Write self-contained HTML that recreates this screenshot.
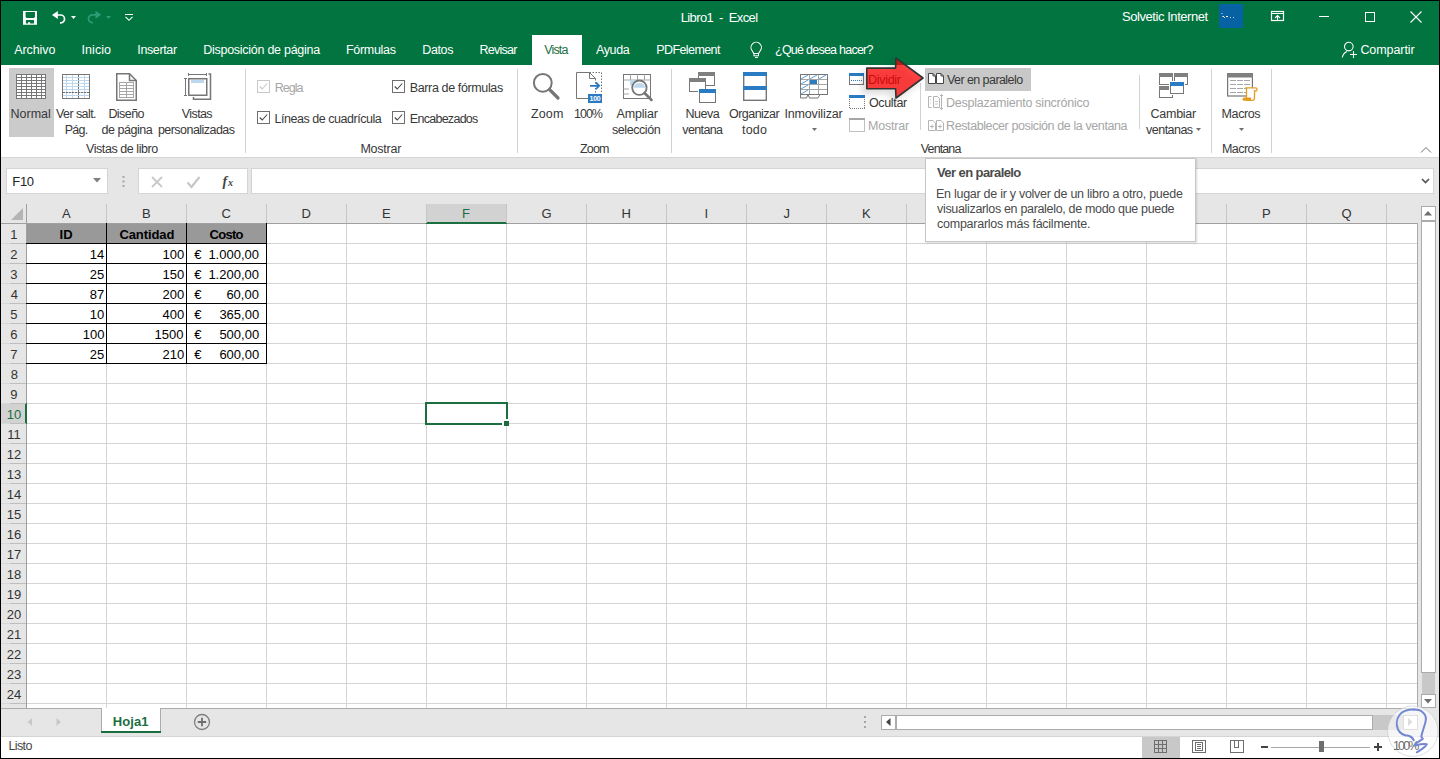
<!DOCTYPE html>
<html><head><meta charset="utf-8"><style>
html,body{margin:0;padding:0;width:1440px;height:759px;overflow:hidden;background:#000;}
.t{position:absolute;white-space:pre;line-height:20px;font-family:'Liberation Sans', sans-serif;}
svg{position:absolute;overflow:visible}
</style></head><body>
<div style="position:absolute;left:1px;top:1px;width:1438px;height:64px;background:#017440;"></div>
<div style="position:absolute;left:532px;top:35px;width:50px;height:30px;background:#FFFFFF;"></div>
<div style="position:absolute;left:1px;top:65px;width:1438px;height:92px;background:#FFFFFF;"></div>
<div style="position:absolute;left:1px;top:157px;width:1438px;height:1px;background:#D5D5D5;"></div>
<div style="position:absolute;left:1px;top:158px;width:1438px;height:46px;background:#E6E6E6;"></div>
<div style="position:absolute;left:9px;top:68px;width:45px;height:69px;background:#CBCBCB;"></div>
<div style="position:absolute;left:925px;top:68px;width:106px;height:23px;background:#C8C8C8;"></div>
<div style="position:absolute;left:245px;top:69px;width:1px;height:84px;background:#D2D2D2;"></div>
<div style="position:absolute;left:517px;top:69px;width:1px;height:84px;background:#D2D2D2;"></div>
<div style="position:absolute;left:671px;top:69px;width:1px;height:84px;background:#D2D2D2;"></div>
<div style="position:absolute;left:920px;top:83px;width:1px;height:47px;background:#D2D2D2;"></div>
<div style="position:absolute;left:1139px;top:75px;width:1px;height:54px;background:#D2D2D2;"></div>
<div style="position:absolute;left:1211px;top:69px;width:1px;height:84px;background:#D2D2D2;"></div>
<div style="position:absolute;left:1271px;top:69px;width:1px;height:84px;background:#D2D2D2;"></div>
<div style="position:absolute;left:6px;top:168px;width:102px;height:26px;background:#FFFFFF;box-sizing:border-box;border:1px solid #D4D4D4"></div>
<div style="position:absolute;left:138px;top:168px;width:110px;height:26px;background:#FFFFFF;box-sizing:border-box;border:1px solid #D4D4D4"></div>
<div style="position:absolute;left:251px;top:168px;width:1183px;height:26px;background:#FFFFFF;box-sizing:border-box;border:1px solid #D4D4D4"></div>
<div style="position:absolute;left:1px;top:203px;width:1417px;height:20px;background:#E6E6E6;"></div>
<div style="position:absolute;left:426px;top:204px;width:80px;height:19px;background:#D2D2D2;"></div>
<div style="position:absolute;left:1px;top:223px;width:1417px;height:1px;background:#A0A0A0;"></div>
<div style="position:absolute;left:426px;top:222px;width:81px;height:2px;background:#1B6E3F;"></div>
<div style="position:absolute;left:27px;top:224px;width:1391px;height:484px;background:#FFFFFF;"></div>
<div style="position:absolute;left:1px;top:224px;width:25px;height:484px;background:#E6E6E6;"></div>
<div style="position:absolute;left:1px;top:403px;width:25px;height:20px;background:#D2D2D2;"></div>
<div style="position:absolute;left:26px;top:204px;width:1px;height:504px;background:#A0A0A0;"></div>
<div style="position:absolute;left:25px;top:403px;width:2px;height:21px;background:#1B6E3F;"></div>
<div style="position:absolute;left:27px;top:224px;width:1391px;height:484px;background:transparent;background-image:repeating-linear-gradient(to right, transparent 0, transparent 79px, #D4D4D4 79px, #D4D4D4 80px),repeating-linear-gradient(to bottom, transparent 0, transparent 19px, #D4D4D4 19px, #D4D4D4 20px);"></div>
<div style="position:absolute;left:106px;top:204px;width:1px;height:19px;background:#C6C6C6;"></div>
<div style="position:absolute;left:186px;top:204px;width:1px;height:19px;background:#C6C6C6;"></div>
<div style="position:absolute;left:266px;top:204px;width:1px;height:19px;background:#C6C6C6;"></div>
<div style="position:absolute;left:346px;top:204px;width:1px;height:19px;background:#C6C6C6;"></div>
<div style="position:absolute;left:426px;top:204px;width:1px;height:19px;background:#C6C6C6;"></div>
<div style="position:absolute;left:506px;top:204px;width:1px;height:19px;background:#C6C6C6;"></div>
<div style="position:absolute;left:586px;top:204px;width:1px;height:19px;background:#C6C6C6;"></div>
<div style="position:absolute;left:666px;top:204px;width:1px;height:19px;background:#C6C6C6;"></div>
<div style="position:absolute;left:746px;top:204px;width:1px;height:19px;background:#C6C6C6;"></div>
<div style="position:absolute;left:826px;top:204px;width:1px;height:19px;background:#C6C6C6;"></div>
<div style="position:absolute;left:906px;top:204px;width:1px;height:19px;background:#C6C6C6;"></div>
<div style="position:absolute;left:986px;top:204px;width:1px;height:19px;background:#C6C6C6;"></div>
<div style="position:absolute;left:1066px;top:204px;width:1px;height:19px;background:#C6C6C6;"></div>
<div style="position:absolute;left:1146px;top:204px;width:1px;height:19px;background:#C6C6C6;"></div>
<div style="position:absolute;left:1226px;top:204px;width:1px;height:19px;background:#C6C6C6;"></div>
<div style="position:absolute;left:1306px;top:204px;width:1px;height:19px;background:#C6C6C6;"></div>
<div style="position:absolute;left:1386px;top:204px;width:1px;height:19px;background:#C6C6C6;"></div>
<div style="position:absolute;left:1px;top:243px;width:9px;height:1px;background:#D8D8D8;"></div>
<div style="position:absolute;left:10px;top:243px;width:16px;height:1px;background:#BDBDBD;"></div>
<div style="position:absolute;left:1px;top:263px;width:9px;height:1px;background:#D8D8D8;"></div>
<div style="position:absolute;left:10px;top:263px;width:16px;height:1px;background:#BDBDBD;"></div>
<div style="position:absolute;left:1px;top:283px;width:9px;height:1px;background:#D8D8D8;"></div>
<div style="position:absolute;left:10px;top:283px;width:16px;height:1px;background:#BDBDBD;"></div>
<div style="position:absolute;left:1px;top:303px;width:9px;height:1px;background:#D8D8D8;"></div>
<div style="position:absolute;left:10px;top:303px;width:16px;height:1px;background:#BDBDBD;"></div>
<div style="position:absolute;left:1px;top:323px;width:9px;height:1px;background:#D8D8D8;"></div>
<div style="position:absolute;left:10px;top:323px;width:16px;height:1px;background:#BDBDBD;"></div>
<div style="position:absolute;left:1px;top:343px;width:9px;height:1px;background:#D8D8D8;"></div>
<div style="position:absolute;left:10px;top:343px;width:16px;height:1px;background:#BDBDBD;"></div>
<div style="position:absolute;left:1px;top:363px;width:9px;height:1px;background:#D8D8D8;"></div>
<div style="position:absolute;left:10px;top:363px;width:16px;height:1px;background:#BDBDBD;"></div>
<div style="position:absolute;left:1px;top:383px;width:9px;height:1px;background:#D8D8D8;"></div>
<div style="position:absolute;left:10px;top:383px;width:16px;height:1px;background:#BDBDBD;"></div>
<div style="position:absolute;left:1px;top:403px;width:9px;height:1px;background:#D8D8D8;"></div>
<div style="position:absolute;left:10px;top:403px;width:16px;height:1px;background:#BDBDBD;"></div>
<div style="position:absolute;left:1px;top:423px;width:9px;height:1px;background:#D8D8D8;"></div>
<div style="position:absolute;left:10px;top:423px;width:16px;height:1px;background:#BDBDBD;"></div>
<div style="position:absolute;left:1px;top:443px;width:9px;height:1px;background:#D8D8D8;"></div>
<div style="position:absolute;left:10px;top:443px;width:16px;height:1px;background:#BDBDBD;"></div>
<div style="position:absolute;left:1px;top:463px;width:9px;height:1px;background:#D8D8D8;"></div>
<div style="position:absolute;left:10px;top:463px;width:16px;height:1px;background:#BDBDBD;"></div>
<div style="position:absolute;left:1px;top:483px;width:9px;height:1px;background:#D8D8D8;"></div>
<div style="position:absolute;left:10px;top:483px;width:16px;height:1px;background:#BDBDBD;"></div>
<div style="position:absolute;left:1px;top:503px;width:9px;height:1px;background:#D8D8D8;"></div>
<div style="position:absolute;left:10px;top:503px;width:16px;height:1px;background:#BDBDBD;"></div>
<div style="position:absolute;left:1px;top:523px;width:9px;height:1px;background:#D8D8D8;"></div>
<div style="position:absolute;left:10px;top:523px;width:16px;height:1px;background:#BDBDBD;"></div>
<div style="position:absolute;left:1px;top:543px;width:9px;height:1px;background:#D8D8D8;"></div>
<div style="position:absolute;left:10px;top:543px;width:16px;height:1px;background:#BDBDBD;"></div>
<div style="position:absolute;left:1px;top:563px;width:9px;height:1px;background:#D8D8D8;"></div>
<div style="position:absolute;left:10px;top:563px;width:16px;height:1px;background:#BDBDBD;"></div>
<div style="position:absolute;left:1px;top:583px;width:9px;height:1px;background:#D8D8D8;"></div>
<div style="position:absolute;left:10px;top:583px;width:16px;height:1px;background:#BDBDBD;"></div>
<div style="position:absolute;left:1px;top:603px;width:9px;height:1px;background:#D8D8D8;"></div>
<div style="position:absolute;left:10px;top:603px;width:16px;height:1px;background:#BDBDBD;"></div>
<div style="position:absolute;left:1px;top:623px;width:9px;height:1px;background:#D8D8D8;"></div>
<div style="position:absolute;left:10px;top:623px;width:16px;height:1px;background:#BDBDBD;"></div>
<div style="position:absolute;left:1px;top:643px;width:9px;height:1px;background:#D8D8D8;"></div>
<div style="position:absolute;left:10px;top:643px;width:16px;height:1px;background:#BDBDBD;"></div>
<div style="position:absolute;left:1px;top:663px;width:9px;height:1px;background:#D8D8D8;"></div>
<div style="position:absolute;left:10px;top:663px;width:16px;height:1px;background:#BDBDBD;"></div>
<div style="position:absolute;left:1px;top:683px;width:9px;height:1px;background:#D8D8D8;"></div>
<div style="position:absolute;left:10px;top:683px;width:16px;height:1px;background:#BDBDBD;"></div>
<div style="position:absolute;left:1px;top:703px;width:9px;height:1px;background:#D8D8D8;"></div>
<div style="position:absolute;left:10px;top:703px;width:16px;height:1px;background:#BDBDBD;"></div>
<div style="position:absolute;left:1417px;top:223px;width:1px;height:485px;background:#ABABAB;"></div>
<div style="position:absolute;left:27px;top:224px;width:239px;height:19px;background:#999999;"></div>
<div style="position:absolute;left:106px;top:223px;width:1px;height:141px;background:#000000;"></div>
<div style="position:absolute;left:186px;top:223px;width:1px;height:141px;background:#000000;"></div>
<div style="position:absolute;left:266px;top:223px;width:1px;height:141px;background:#000000;"></div>
<div style="position:absolute;left:26px;top:243px;width:241px;height:1px;background:#000000;"></div>
<div style="position:absolute;left:26px;top:263px;width:241px;height:1px;background:#000000;"></div>
<div style="position:absolute;left:26px;top:283px;width:241px;height:1px;background:#000000;"></div>
<div style="position:absolute;left:26px;top:303px;width:241px;height:1px;background:#000000;"></div>
<div style="position:absolute;left:26px;top:323px;width:241px;height:1px;background:#000000;"></div>
<div style="position:absolute;left:26px;top:343px;width:241px;height:1px;background:#000000;"></div>
<div style="position:absolute;left:26px;top:363px;width:241px;height:1px;background:#000000;"></div>
<div style="position:absolute;left:425px;top:402px;width:83px;height:23px;background:transparent;box-sizing:border-box;border:2px solid #1B6E3F"></div>
<div style="position:absolute;left:502px;top:419px;width:7px;height:7px;background:#FFFFFF;"></div>
<div style="position:absolute;left:504px;top:421px;width:5px;height:5px;background:#1B6E3F;"></div>
<svg style="position:absolute;left:11px;top:208px" width="13" height="13"><polygon points="12,0 12,12 0,12" fill="#B4B4B4"/></svg>
<div style="position:absolute;left:1418px;top:203px;width:21px;height:505px;background:#E6E6E6;"></div>
<div style="position:absolute;left:1421px;top:206px;width:15px;height:15px;background:#FFFFFF;box-sizing:border-box;border:1px solid #ABABAB"></div>
<div style="position:absolute;left:1421px;top:221px;width:15px;height:452px;background:#FFFFFF;box-sizing:border-box;border:1px solid #ABABAB"></div>
<div style="position:absolute;left:1422px;top:673px;width:13px;height:21px;background:#C8C8C8;"></div>
<div style="position:absolute;left:1421px;top:694px;width:15px;height:14px;background:#FFFFFF;box-sizing:border-box;border:1px solid #ABABAB"></div>
<div style="position:absolute;left:1px;top:708px;width:1438px;height:28px;background:#E6E6E6;"></div>
<div style="position:absolute;left:1px;top:708px;width:1417px;height:1px;background:#ABABAB;"></div>
<div style="position:absolute;left:101px;top:708px;width:60px;height:25px;background:#FFFFFF;box-sizing:border-box;border:1px solid #ABABAB;border-top:none"></div>
<div style="position:absolute;left:101px;top:731px;width:60px;height:2px;background:#1B6E3F;"></div>
<div style="position:absolute;left:881px;top:715px;width:537px;height:15px;background:#C8C8C8;"></div>
<div style="position:absolute;left:881px;top:715px;width:15px;height:15px;background:#FFFFFF;box-sizing:border-box;border:1px solid #ABABAB"></div>
<div style="position:absolute;left:896px;top:715px;width:477px;height:15px;background:#FFFFFF;box-sizing:border-box;border:1px solid #ABABAB"></div>
<div style="position:absolute;left:1403px;top:715px;width:15px;height:15px;background:#FFFFFF;box-sizing:border-box;border:1px solid #ABABAB"></div>
<div style="position:absolute;left:1px;top:736px;width:1438px;height:1px;background:#D4D4D4;"></div>
<div style="position:absolute;left:1px;top:737px;width:1438px;height:21px;background:#FFFFFF;"></div>
<div style="position:absolute;left:1142px;top:737px;width:38px;height:21px;background:#C8C8C8;"></div>
<div style="position:absolute;left:1271px;top:747px;width:99px;height:1px;background:#A6A6A6;"></div>
<div style="position:absolute;left:1319px;top:741px;width:5px;height:11px;background:#6E6E6E;"></div>
<div style="position:absolute;left:925px;top:158px;width:271px;height:84px;background:#FFFFFF;box-sizing:border-box;border:1px solid #C6C6C6;box-shadow:1px 1px 2px rgba(0,0,0,0.15);z-index:10"></div>
<svg style="left:20px;top:8px" width="20" height="20" viewBox="20 8 20 20"><path d="M23,11 H37 V24.8 H23 Z M25.6,12.1 V17 L26.6,18 H33.9 L35,17 V12.1 Z M25.9,20 V23.6 H28 V22.2 H30.1 V23.6 H34 V20 Z" fill="#fff" fill-rule="evenodd"/></svg>
<svg style="left:48px;top:8px" width="22" height="20" viewBox="48 8 22 20"><polygon points="52,15 57.8,11 57.8,19" fill="#fff"/><path d="M56,15 H60.5 A3.9,3.9 0 0 1 60.8,22.8 H60" fill="none" stroke="#fff" stroke-width="1.7"/></svg>
<svg style="left:71px;top:16px;" width="6" height="4" viewBox="0 0 6 4"><polygon points="0,0 5,0 2.5,3" fill="#fff"/></svg>
<svg style="left:84px;top:8px" width="22" height="20" viewBox="84 8 22 20"><polygon points="101.3,14.8 95.5,10.8 95.5,18.8" fill="#2D9C76"/><path d="M97,14.8 H92.5 A3.9,3.9 0 0 0 92.2,22.6 H93" fill="none" stroke="#2D9C76" stroke-width="1.7"/></svg>
<svg style="left:106px;top:16px;" width="6" height="4" viewBox="0 0 6 4"><polygon points="0,0 5,0 2.5,3" fill="#2D9C76"/></svg>
<svg style="left:124px;top:13px;" width="10" height="10" viewBox="0 0 10 10"><rect x="1" y="1" width="8" height="1" fill="#fff"/><path d="M1.5,3.8 L5,7.3 L8.5,3.8" fill="none" stroke="#fff" stroke-width="1.1"/></svg>
<svg style="left:1219px;top:4px;" width="24" height="24" viewBox="0 0 24 24"><rect width="24" height="24" fill="#0662A3"/><rect x="2.5" y="9" width="1" height="1" fill="#cfd8ff"/><rect x="3.5" y="12" width="1.5" height="1" fill="#fff"/><rect x="5" y="13" width="1" height="1" fill="#dcd"/><rect x="7" y="12" width="2" height="1" fill="#fff"/><rect x="11" y="13" width="1" height="1" fill="#ccd"/><rect x="14" y="13" width="1" height="1" fill="#ccd"/></svg>
<svg style="left:1270px;top:10px;" width="16" height="13" viewBox="0 0 16 13"><rect x="1.5" y="1.5" width="12" height="9" fill="none" stroke="#fff" stroke-width="1.2"/><rect x="1.5" y="3" width="12" height="1" fill="#fff"/><path d="M7.5,10.5 V5.5 M5,8 L7.5,5.5 L10,8" fill="none" stroke="#fff" stroke-width="1.1"/></svg>
<svg style="left:1318px;top:15px;" width="12" height="3" viewBox="0 0 12 3"><rect x="1" y="1" width="10" height="1" fill="#fff"/></svg>
<svg style="left:1364px;top:11px;" width="12" height="12" viewBox="0 0 12 12"><rect x="1.5" y="1.5" width="9" height="9" fill="none" stroke="#fff" stroke-width="1"/></svg>
<svg style="left:1409px;top:10px;" width="14" height="14" viewBox="0 0 14 14"><path d="M1.5,1.5 L12.5,12.5 M12.5,1.5 L1.5,12.5" stroke="#fff" stroke-width="1.1"/></svg>
<svg style="left:748px;top:40px;" width="17" height="20" viewBox="0 0 17 20"><path d="M5.8,13.5 L4,10.5 A5.2,5.2 0 1 1 12.4,10.5 L10.6,13.5 Z" fill="none" stroke="#fff" stroke-width="1.1"/><rect x="6" y="13.5" width="4.5" height="2.3" fill="none" stroke="#fff" stroke-width="1"/><rect x="7" y="17" width="2.8" height="1" fill="#fff"/></svg>
<svg style="left:1340px;top:40px;" width="20" height="20" viewBox="0 0 20 20"><circle cx="8.8" cy="6.6" r="4.3" fill="none" stroke="#fff" stroke-width="1.1"/><path d="M2.3,17.5 A8,8 0 0 1 7,11.6" fill="none" stroke="#fff" stroke-width="1.1"/><path d="M13.5,11 V18 M10,14.5 H17" stroke="#fff" stroke-width="1.1"/></svg>
<svg style="left:16px;top:74px;shape-rendering:crispEdges" width="30" height="25" viewBox="0 0 30 25"><rect x="0.5" y="0.5" width="29" height="24" fill="#fff" stroke="#767676" stroke-width="1.4"/><rect x="5" y="0" width="1" height="25" fill="#767676"/><rect x="10" y="0" width="1" height="25" fill="#767676"/><rect x="15" y="0" width="1" height="25" fill="#767676"/><rect x="20" y="0" width="1" height="25" fill="#767676"/><rect x="25" y="0" width="1" height="25" fill="#767676"/><rect x="0" y="3" width="30" height="1" fill="#767676"/><rect x="0" y="6" width="30" height="1" fill="#767676"/><rect x="0" y="9" width="30" height="1" fill="#767676"/><rect x="0" y="12" width="30" height="1" fill="#767676"/><rect x="0" y="15" width="30" height="1" fill="#767676"/><rect x="0" y="18" width="30" height="1" fill="#767676"/><rect x="0" y="21" width="30" height="1" fill="#767676"/></svg>
<svg style="left:62px;top:74px;shape-rendering:crispEdges" width="28" height="25" viewBox="0 0 28 25"><rect x="0" y="0" width="28" height="25" fill="#fff"/><rect x="1" y="3" width="26" height="1" fill="#BDD7EE"/><rect x="1" y="6" width="26" height="1" fill="#BDD7EE"/><rect x="1" y="9" width="26" height="1" fill="#BDD7EE"/><rect x="1" y="12" width="26" height="1" fill="#BDD7EE"/><rect x="1" y="15" width="26" height="1" fill="#BDD7EE"/><rect x="1" y="18" width="26" height="1" fill="#BDD7EE"/><rect x="1" y="21" width="26" height="1" fill="#BDD7EE"/><rect x="4" y="1" width="1" height="23" fill="#BDD7EE"/><rect x="10" y="1" width="1" height="23" fill="#BDD7EE"/><rect x="22" y="1" width="1" height="23" fill="#BDD7EE"/><rect x="0.5" y="0.5" width="27" height="24" fill="none" stroke="#767676" stroke-width="1.2"/><line x1="16.5" y1="1" x2="16.5" y2="24" stroke="#6E6E6E" stroke-width="1" stroke-dasharray="2,1"/><line x1="1" y1="18.5" x2="27" y2="18.5" stroke="#6E6E6E" stroke-width="1" stroke-dasharray="2,1"/></svg>
<svg style="left:116px;top:73px;" width="21" height="28" viewBox="0 0 21 28"><path d="M0.75,0.75 H13.5 L20.25,7.5 V27.25 H0.75 Z" fill="#fff" stroke="#767676" stroke-width="1.5"/><path d="M13.5,0.75 V7.5 H20.25" fill="none" stroke="#767676" stroke-width="1.5"/><rect x="3.5" y="9.5" width="14" height="15" fill="none" stroke="#A6A6A6" stroke-width="1"/><line x1="3.5" y1="12.5" x2="17.5" y2="12.5" stroke="#A6A6A6" stroke-width="1"/><line x1="3.5" y1="15.5" x2="17.5" y2="15.5" stroke="#A6A6A6" stroke-width="1"/><line x1="3.5" y1="18.5" x2="17.5" y2="18.5" stroke="#A6A6A6" stroke-width="1"/><line x1="3.5" y1="21.5" x2="17.5" y2="21.5" stroke="#A6A6A6" stroke-width="1"/><line x1="10.5" y1="9.5" x2="10.5" y2="24.5" stroke="#A6A6A6" stroke-width="1"/></svg>
<svg style="left:183px;top:73px;" width="29" height="28" viewBox="0 0 29 28"><path d="M1,5.5 H4 M2.5,5.5 V22.5 M1,22.5 H4" fill="none" stroke="#767676" stroke-width="1"/><path d="M5.5,0 V3 M5.5,1.5 H23.5 M23.5,0 V3" fill="none" stroke="#767676" stroke-width="1"/><rect x="5.75" y="5.75" width="18" height="16.5" fill="#fff" stroke="#767676" stroke-width="1.5"/><rect x="8" y="7" width="13" height="3" fill="#BDD7EE"/><path d="M25.5,1 H27.5 V26.25 H10.5 V24" fill="none" stroke="#767676" stroke-width="1.5"/></svg>
<svg style="left:257px;top:80px;" width="13" height="13" viewBox="0 0 13 13"><rect x="0.5" y="0.5" width="12" height="12" fill="#fff" stroke="#C8C8C8" stroke-width="1"/><path d="M2.8,6.5 L5.2,9 L10.2,3.5" fill="none" stroke="#C8C8C8" stroke-width="1.1"/></svg>
<svg style="left:257px;top:111px;" width="13" height="13" viewBox="0 0 13 13"><rect x="0.5" y="0.5" width="12" height="12" fill="#fff" stroke="#6E6E6E" stroke-width="1"/><path d="M2.8,6.5 L5.2,9 L10.2,3.5" fill="none" stroke="#444" stroke-width="1.1"/></svg>
<svg style="left:392px;top:80px;" width="13" height="13" viewBox="0 0 13 13"><rect x="0.5" y="0.5" width="12" height="12" fill="#fff" stroke="#6E6E6E" stroke-width="1"/><path d="M2.8,6.5 L5.2,9 L10.2,3.5" fill="none" stroke="#444" stroke-width="1.1"/></svg>
<svg style="left:392px;top:111px;" width="13" height="13" viewBox="0 0 13 13"><rect x="0.5" y="0.5" width="12" height="12" fill="#fff" stroke="#6E6E6E" stroke-width="1"/><path d="M2.8,6.5 L5.2,9 L10.2,3.5" fill="none" stroke="#444" stroke-width="1.1"/></svg>
<svg style="left:530px;top:70px;" width="32" height="32" viewBox="0 0 32 32"><circle cx="12.8" cy="12.8" r="8.9" fill="#fff" stroke="#767676" stroke-width="2"/><path d="M19.5,19.5 L28,28" stroke="#767676" stroke-width="3.2" stroke-linecap="round"/></svg>
<svg style="left:576px;top:72px;" width="27" height="31" viewBox="0 0 27 31"><path d="M19.5,20 V6.5 L13.5,0.5 H0.5 V26.5 H12" fill="#fff" stroke="#767676" stroke-width="1"/><path d="M13.5,0.5 V6.5 H19.5" fill="none" stroke="#767676" stroke-width="1"/><rect x="19" y="7" width="2" height="14" fill="#fff"/><path d="M13.5,0.5 H25.5 V20.5 M19.5,7 V20.5" fill="none" stroke="#767676" stroke-width="1" stroke-dasharray="1.5,1.5"/><path d="M14,13.8 H23 M19.8,10.5 L23.2,13.8 L19.8,17.1" fill="none" stroke="#2B7BC2" stroke-width="1.8"/><rect x="12" y="22" width="14" height="9" fill="#2B7BC2"/><text x="19" y="29.3" font-family="Liberation Sans" font-weight="bold" font-size="7" letter-spacing="-0.3" fill="#fff" text-anchor="middle">100</text></svg>
<svg style="left:623px;top:74px;" width="30" height="28" viewBox="0 0 30 28"><rect x="0.5" y="0.5" width="27" height="24" fill="#fff" stroke="#767676" stroke-width="1"/><line x1="7.5" y1="0.5" x2="7.5" y2="6" stroke="#A6A6A6" stroke-width="1"/><line x1="14.5" y1="0.5" x2="14.5" y2="6" stroke="#A6A6A6" stroke-width="1"/><line x1="21.5" y1="0.5" x2="21.5" y2="6" stroke="#A6A6A6" stroke-width="1"/><line x1="0.5" y1="6" x2="27.5" y2="6" stroke="#A6A6A6" stroke-width="1"/><line x1="0.5" y1="15" x2="6" y2="15" stroke="#A6A6A6" stroke-width="1"/><line x1="0.5" y1="20" x2="6" y2="20" stroke="#A6A6A6" stroke-width="1"/><rect x="7" y="6" width="5" height="5" fill="#BDD7EE"/><circle cx="16.4" cy="13.7" r="7.2" fill="#fff" stroke="#767676" stroke-width="1.8"/><path d="M10.5,13.8 A6,6 0 0 1 22.3,13.8 Z" fill="#BDD7EE"/><path d="M21.5,19 L28.5,26" stroke="#767676" stroke-width="2.6" stroke-linecap="round"/></svg>
<svg style="left:689px;top:72px;shape-rendering:crispEdges" width="27" height="31" viewBox="0 0 27 31"><rect x="9.5" y="0.5" width="16" height="13" fill="#fff" stroke="#767676" stroke-width="1"/><rect x="9" y="0" width="17" height="4" fill="#7F7F7F"/><rect x="0.5" y="6.5" width="16" height="13" fill="#fff" stroke="#767676" stroke-width="1"/><rect x="0" y="6" width="17" height="4" fill="#7F7F7F"/><rect x="9" y="15" width="3" height="6" fill="#fff"/><rect x="10.5" y="17.5" width="16" height="13" fill="#fff" stroke="#767676" stroke-width="1"/><rect x="10" y="17" width="17" height="4" fill="#2B7BC2"/></svg>
<svg style="left:743px;top:72px;" width="24" height="29" viewBox="0 0 24 29"><rect x="0.7" y="0.7" width="22.6" height="27.6" fill="#fff" stroke="#767676" stroke-width="1.4"/><rect x="0" y="0" width="24" height="4" fill="#2B7BC2"/><rect x="0" y="14" width="24" height="4" fill="#2B7BC2"/></svg>
<svg style="left:800px;top:74px;" width="28" height="25" viewBox="0 0 28 25"><path d="M0.5,0.5 H27.5 V20.5 H20 L18,24 H9.5 L8,20.5 H8 L6.5,24 H0.5 Z" fill="#fff" stroke="#767676" stroke-width="1"/><line x1="9.5" y1="0.5" x2="9.5" y2="20.5" stroke="#A6A6A6" stroke-width="1"/><line x1="18.5" y1="0.5" x2="18.5" y2="20.5" stroke="#A6A6A6" stroke-width="1"/><line x1="0.5" y1="5.5" x2="27.5" y2="5.5" stroke="#A6A6A6" stroke-width="1"/><line x1="0.5" y1="10.5" x2="27.5" y2="10.5" stroke="#A6A6A6" stroke-width="1"/><line x1="0.5" y1="15.5" x2="27.5" y2="15.5" stroke="#A6A6A6" stroke-width="1"/><line x1="0.5" y1="20.5" x2="27.5" y2="20.5" stroke="#A6A6A6" stroke-width="1"/><rect x="0.5" y="0.5" width="27" height="20" fill="none" stroke="#767676" stroke-width="1"/><rect x="10" y="6" width="7" height="4" fill="#2B7BC2"/><line x1="1" y1="5" x2="8" y2="1" stroke="#5B9BD5" stroke-width="1"/><line x1="10" y1="5" x2="17" y2="1" stroke="#5B9BD5" stroke-width="1"/><line x1="19" y1="5" x2="26" y2="1" stroke="#5B9BD5" stroke-width="1"/><line x1="1" y1="10" x2="8" y2="6" stroke="#5B9BD5" stroke-width="1"/><line x1="1" y1="15" x2="8" y2="11" stroke="#5B9BD5" stroke-width="1"/><line x1="1" y1="20" x2="8" y2="16" stroke="#5B9BD5" stroke-width="1"/></svg>
<svg style="left:849px;top:73px;shape-rendering:crispEdges" width="15" height="12" viewBox="0 0 15 12"><rect x="0.5" y="0.5" width="14" height="11" fill="#fff" stroke="#767676" stroke-width="1"/><rect x="0" y="0" width="15" height="3" fill="#2B7BC2"/><line x1="2" y1="7.5" x2="13" y2="7.5" stroke="#2B7BC2" stroke-dasharray="1,1"/></svg>
<svg style="left:849px;top:95px;shape-rendering:crispEdges" width="16" height="14" viewBox="0 0 16 14"><rect x="0.5" y="0.5" width="15" height="13" fill="none" stroke="#767676" stroke-width="1" stroke-dasharray="1,1"/><rect x="0" y="0" width="16" height="3" fill="#2B7BC2"/></svg>
<svg style="left:849px;top:118px;shape-rendering:crispEdges" width="16" height="14" viewBox="0 0 16 14"><rect x="0.5" y="0.5" width="15" height="13" fill="#fff" stroke="#BFBFBF" stroke-width="1"/><rect x="0" y="0" width="16" height="2" fill="#A6A6A6"/></svg>
<svg style="left:928px;top:73px;" width="16" height="11" viewBox="0 0 16 11"><path d="M0.5,0.5 H5 L7.5,3 V10.5 H0.5 Z M8.5,0.5 H13 L15.5,3 V10.5 H8.5 Z" fill="#fff" stroke="#444" stroke-width="1"/><path d="M5,0.5 V3 H7.5 M13,0.5 V3 H15.5" fill="none" stroke="#444" stroke-width="1"/></svg>
<svg style="left:928px;top:94px;" width="16" height="16" viewBox="0 0 16 16"><path d="M3.5,2.5 H0.5 V13.5 H3.5" fill="none" stroke="#B4B4B4"/><path d="M5.5,2.5 H9.5 L11.5,4.5 V13.5 H5.5 Z" fill="none" stroke="#B4B4B4"/><path d="M13.5,0.5 V15.5 M12,2 L13.5,0.5 L15,2 M12,14 L13.5,15.5 L15,14" fill="none" stroke="#B4B4B4"/><path d="M2,6 H3 M2,9 H3 M7,7.5 H10 M7,10 H10" stroke="#C8C8C8"/></svg>
<svg style="left:928px;top:120px;" width="16" height="11" viewBox="0 0 16 11"><path d="M0.5,0.5 H5 L7.5,3 V10.5 H0.5 Z M8.5,0.5 H13 L15.5,3 V10.5 H8.5 Z" fill="#fff" stroke="#B4B4B4" stroke-width="1"/><path d="M2,6.5 H6 M4,4.5 V8.5 M10,6.5 H14 M12,4.5 V8.5" stroke="#B4B4B4"/></svg>
<svg style="left:1159px;top:73px;shape-rendering:crispEdges" width="29" height="25" viewBox="0 0 29 25"><rect x="0.5" y="0.5" width="13" height="11" fill="#fff" stroke="#767676" stroke-width="1"/><rect x="0" y="0" width="14" height="4" fill="#7F7F7F"/><rect x="15.5" y="0.5" width="13" height="11" fill="#fff" stroke="#767676" stroke-width="1"/><rect x="15" y="0" width="14" height="4" fill="#7F7F7F"/><rect x="0.5" y="13.5" width="13" height="11" fill="#fff" stroke="#767676" stroke-width="1"/><rect x="0" y="13" width="14" height="4" fill="#7F7F7F"/><rect x="10" y="8" width="16" height="14" fill="#fff"/><rect x="11.5" y="9.5" width="13" height="11" fill="#fff" stroke="#767676" stroke-width="1"/><rect x="11" y="9" width="14" height="4" fill="#2B7BC2"/></svg>
<svg style="left:1227px;top:73px;" width="32" height="29" viewBox="0 0 32 29"><rect x="0.6" y="0.6" width="24.8" height="22.4" fill="#fff" stroke="#767676" stroke-width="1.2"/><rect x="0" y="0" width="26" height="4.5" fill="#7F7F7F"/><line x1="3" y1="7.5" x2="9" y2="7.5" stroke="#A6A6A6" stroke-width="1"/><line x1="10" y1="7.5" x2="16" y2="7.5" stroke="#A6A6A6" stroke-width="1"/><line x1="17" y1="7.5" x2="23" y2="7.5" stroke="#A6A6A6" stroke-width="1"/><line x1="3" y1="11.5" x2="9" y2="11.5" stroke="#A6A6A6" stroke-width="1"/><line x1="10" y1="11.5" x2="16" y2="11.5" stroke="#A6A6A6" stroke-width="1"/><line x1="17" y1="11.5" x2="23" y2="11.5" stroke="#A6A6A6" stroke-width="1"/><line x1="3" y1="15.5" x2="9" y2="15.5" stroke="#A6A6A6" stroke-width="1"/><line x1="10" y1="15.5" x2="16" y2="15.5" stroke="#A6A6A6" stroke-width="1"/><line x1="17" y1="15.5" x2="23" y2="15.5" stroke="#A6A6A6" stroke-width="1"/><line x1="3" y1="19.5" x2="9" y2="19.5" stroke="#A6A6A6" stroke-width="1"/><line x1="10" y1="19.5" x2="16" y2="19.5" stroke="#A6A6A6" stroke-width="1"/><line x1="17" y1="19.5" x2="23" y2="19.5" stroke="#A6A6A6" stroke-width="1"/><path d="M19,14.8 H28.5 A1.6,1.6 0 0 1 28.5,18 H27.5 V25.5 A1.8,1.8 0 0 1 25.7,27.3 H19.5 V15.5 A0.8,0.8 0 0 1 19,14.8 Z" fill="#fff" stroke="#E19D22" stroke-width="1.3"/><path d="M17.2,24.5 H24 V27.8 H17.2 A1.6,1.6 0 0 1 17.2,24.5 Z" fill="#E19D22"/></svg>
<svg style="left:812px;top:128px;" width="5" height="3" viewBox="0 0 5 3"><polygon points="0,0 5,0 2.5,3" fill="#6E6E6E"/></svg>
<svg style="left:1196px;top:128px;" width="5" height="3" viewBox="0 0 5 3"><polygon points="0,0 5,0 2.5,3" fill="#6E6E6E"/></svg>
<svg style="left:1239px;top:128px;" width="5" height="3" viewBox="0 0 5 3"><polygon points="0,0 5,0 2.5,3" fill="#6E6E6E"/></svg>
<svg style="left:1420px;top:146px;" width="12" height="8" viewBox="0 0 12 8"><path d="M1,6.5 L6,1.5 L11,6.5" fill="none" stroke="#6E6E6E" stroke-width="1"/></svg>
<svg style="left:93px;top:178px;" width="9" height="5" viewBox="0 0 9 5"><polygon points="0,0 8,0 4,4.5" fill="#7F7F7F"/></svg>
<svg style="left:122px;top:176px;" width="3" height="11" viewBox="0 0 3 11"><rect x="0.5" y="0" width="2" height="2" fill="#A6A6A6"/><rect x="0.5" y="4.5" width="2" height="2" fill="#A6A6A6"/><rect x="0.5" y="9" width="2" height="2" fill="#A6A6A6"/></svg>
<svg style="left:150px;top:175px;" width="14" height="14" viewBox="0 0 14 14"><path d="M2,2 L12,12 M12,2 L2,12" stroke="#C8C8C8" stroke-width="1.8"/></svg>
<svg style="left:186px;top:175px;" width="15" height="14" viewBox="0 0 15 14"><path d="M1.5,7.5 L5.5,12 L13.5,2" fill="none" stroke="#C8C8C8" stroke-width="2.3"/></svg>
<svg style="left:220px;top:172px;" width="20" height="18" viewBox="0 0 20 18"><text x="2.5" y="13.5" font-family="Liberation Serif" font-style="italic" font-weight="bold" font-size="14" fill="#444">f</text><text x="8" y="13.5" font-family="Liberation Serif" font-style="italic" font-weight="bold" font-size="10" fill="#444">x</text></svg>
<svg style="left:1421px;top:178px;" width="9" height="6" viewBox="0 0 9 6"><path d="M1,1 L4.5,4.5 L8,1" fill="none" stroke="#555" stroke-width="1.7"/></svg>
<svg style="left:1424px;top:211px;" width="9" height="5" viewBox="0 0 9 5"><polygon points="0,4.5 8,4.5 4,0" fill="#6E6E6E"/></svg>
<svg style="left:1424px;top:699px;" width="9" height="5" viewBox="0 0 9 5"><polygon points="0,0 8,0 4,4.5" fill="#6E6E6E"/></svg>
<svg style="left:886px;top:718px;" width="5" height="9" viewBox="0 0 5 9"><polygon points="4.5,0 4.5,8 0,4" fill="#444"/></svg>
<svg style="left:1408px;top:718px;" width="5" height="9" viewBox="0 0 5 9"><polygon points="0,0 0,8 4.5,4" fill="#A6A6A6"/></svg>
<svg style="left:27px;top:718px;" width="6" height="9" viewBox="0 0 6 9"><polygon points="5,0 5,8 0.5,4" fill="#C8C8C8"/></svg>
<svg style="left:56px;top:718px;" width="6" height="9" viewBox="0 0 6 9"><polygon points="0.5,0 0.5,8 5,4" fill="#C8C8C8"/></svg>
<svg style="left:864px;top:716px;" width="3" height="12" viewBox="0 0 3 12"><rect x="0" y="0" width="2" height="2" fill="#A6A6A6"/><rect x="0" y="5" width="2" height="2" fill="#A6A6A6"/><rect x="0" y="10" width="2" height="2" fill="#A6A6A6"/></svg>
<svg style="left:193px;top:713px;" width="18" height="18" viewBox="0 0 18 18"><circle cx="9" cy="9" r="7.5" fill="none" stroke="#7F7F7F" stroke-width="1.3"/><path d="M9,4.8 V13.2 M4.8,9 H13.2" stroke="#6E6E6E" stroke-width="1.8"/></svg>
<svg style="left:1154px;top:740px;shape-rendering:crispEdges" width="13" height="13" viewBox="0 0 13 13"><line x1="0.5" y1="0" x2="0.5" y2="13" stroke="#6E6E6E" stroke-width="1"/><line x1="0" y1="0.5" x2="13" y2="0.5" stroke="#6E6E6E" stroke-width="1"/><line x1="4.5" y1="0" x2="4.5" y2="13" stroke="#6E6E6E" stroke-width="1"/><line x1="0" y1="4.5" x2="13" y2="4.5" stroke="#6E6E6E" stroke-width="1"/><line x1="8.5" y1="0" x2="8.5" y2="13" stroke="#6E6E6E" stroke-width="1"/><line x1="0" y1="8.5" x2="13" y2="8.5" stroke="#6E6E6E" stroke-width="1"/><line x1="12.5" y1="0" x2="12.5" y2="13" stroke="#6E6E6E" stroke-width="1"/><line x1="0" y1="12.5" x2="13" y2="12.5" stroke="#6E6E6E" stroke-width="1"/></svg>
<svg style="left:1192px;top:740px;shape-rendering:crispEdges" width="14" height="13" viewBox="0 0 14 13"><rect x="0.5" y="0.5" width="13" height="12" fill="none" stroke="#6E6E6E"/><rect x="3.5" y="2.5" width="7" height="8" fill="none" stroke="#6E6E6E"/><path d="M5,4.5 H9 M5,6.5 H9 M5,8.5 H9" stroke="#6E6E6E"/></svg>
<svg style="left:1230px;top:740px;shape-rendering:crispEdges" width="14" height="13" viewBox="0 0 14 13"><rect x="0.5" y="0.5" width="13" height="12" fill="none" stroke="#6E6E6E"/><path d="M4.5,0.5 V7.5 H8.5 V0.5" fill="none" stroke="#6E6E6E"/></svg>
<svg style="left:1261px;top:746px;" width="7" height="2" viewBox="0 0 7 2"><rect width="7" height="2" fill="#444"/></svg>
<svg style="left:1374px;top:743px;" width="8" height="8" viewBox="0 0 8 8"><path d="M4,0 V8 M0,4 H8" stroke="#444" stroke-width="2"/></svg>
<svg style="left:850px;top:50px;z-index:5;filter:drop-shadow(-4px 4px 3px rgba(0,0,0,0.18))" width="80" height="56" viewBox="850 50 80 56"><polygon points="866.8,68.1 895.6,68.1 895.9,58 923,78 896,98 895.6,88.7 866.8,88.7" fill="rgba(255,0,0,0.74)" stroke="#333" stroke-width="1.6" stroke-linejoin="round"/></svg>
<svg style="left:1385px;top:704px" width="55" height="55" viewBox="1385 704 55 55"><circle cx="1412.8" cy="731.2" r="25.2" fill="rgba(255,255,255,0.62)" stroke="rgba(190,195,205,0.55)" stroke-width="1"/></svg>
<svg style="left:1385px;top:704px;z-index:12" width="55" height="55" viewBox="1385 704 55 55"><path d="M1413.8,709.5 C1407,709.5 1402,711.5 1399.5,715 C1396.5,719 1396,725 1398,729.5 C1400,733.5 1404,735.5 1408.5,735.8 C1411,736.5 1413,738.5 1413.8,740.3" fill="none" stroke="#7487D2" stroke-width="2" stroke-linecap="round"/><path d="M1413.8,709.5 C1417,709.5 1420,710 1421.8,711.5 C1425,714 1426.3,717 1425.8,720 C1425.3,725 1422.5,730 1421.3,736.6 L1422.8,738.8 L1416,743.3 L1414.5,745.6 C1418,744.8 1423,743.5 1426.8,744.3 C1425,747.5 1420,750.5 1416.8,752.3" fill="none" stroke="#7487D2" stroke-width="2" stroke-linecap="round" stroke-linejoin="round"/></svg>
<div class="t" style="left:680.70px;top:8.00px;font-size:13px;color:#FFFFFF;letter-spacing:-0.620px">Libro1  -  Excel</div>
<div class="t" style="left:1122.00px;top:7.00px;font-size:13px;color:#FFFFFF;letter-spacing:-0.438px">Solvetic Internet</div>
<div class="t" style="left:14.20px;top:40.00px;font-size:12.5px;color:#FFFFFF;letter-spacing:-0.083px">Archivo</div>
<div class="t" style="left:81.50px;top:40.00px;font-size:12.5px;color:#FFFFFF;letter-spacing:0.060px">Inicio</div>
<div class="t" style="left:137.30px;top:40.00px;font-size:12.5px;color:#FFFFFF;letter-spacing:-0.371px">Insertar</div>
<div class="t" style="left:203.20px;top:40.00px;font-size:12.5px;color:#FFFFFF;letter-spacing:-0.265px">Disposición de página</div>
<div class="t" style="left:346.00px;top:40.00px;font-size:12.5px;color:#FFFFFF;letter-spacing:-0.300px">Fórmulas</div>
<div class="t" style="left:422.30px;top:40.00px;font-size:12.5px;color:#FFFFFF;letter-spacing:-0.375px">Datos</div>
<div class="t" style="left:479.40px;top:40.00px;font-size:12.5px;color:#FFFFFF;letter-spacing:-0.733px">Revisar</div>
<div class="t" style="left:596.00px;top:40.00px;font-size:12.5px;color:#FFFFFF;letter-spacing:-0.375px">Ayuda</div>
<div class="t" style="left:656.20px;top:40.00px;font-size:12.5px;color:#FFFFFF;letter-spacing:-0.578px">PDFelement</div>
<div class="t" style="left:775.00px;top:40.00px;font-size:12.5px;color:#FFFFFF;letter-spacing:-0.750px">¿Qué desea hacer?</div>
<div class="t" style="left:1360.40px;top:40.00px;font-size:12.5px;color:#FFFFFF;letter-spacing:-0.075px">Compartir</div>
<div class="t" style="left:544.30px;top:40.00px;font-size:12.5px;color:#1B6E3F;letter-spacing:-0.875px">Vista</div>
<div class="t" style="left:10.50px;top:104.00px;font-size:12.5px;color:#383838">Normal</div>
<div class="t" style="left:56.00px;top:104.00px;font-size:12.5px;color:#383838;letter-spacing:-0.575px">Ver salt.</div>
<div class="t" style="left:64.80px;top:120.00px;font-size:12.5px;color:#383838;letter-spacing:-0.767px">Pág.</div>
<div class="t" style="left:108.40px;top:104.00px;font-size:12.5px;color:#383838;letter-spacing:-0.560px">Diseño</div>
<div class="t" style="left:101.60px;top:120.00px;font-size:12.5px;color:#383838;letter-spacing:-0.475px">de página</div>
<div class="t" style="left:181.80px;top:104.00px;font-size:12.5px;color:#383838;letter-spacing:-0.600px">Vistas</div>
<div class="t" style="left:157.90px;top:120.00px;font-size:12.5px;color:#383838;letter-spacing:-0.538px">personalizadas</div>
<div class="t" style="left:86.00px;top:139.00px;font-size:12.5px;color:#383838;letter-spacing:-0.429px">Vistas de libro</div>
<div class="t" style="left:274.80px;top:78.00px;font-size:12.5px;color:#A6A6A6;letter-spacing:-0.975px">Regla</div>
<div class="t" style="left:274.60px;top:109.00px;font-size:12.5px;color:#383838;letter-spacing:-0.474px">Líneas de cuadrícula</div>
<div class="t" style="left:409.80px;top:78.00px;font-size:12.5px;color:#383838;letter-spacing:-0.375px">Barra de fórmulas</div>
<div class="t" style="left:409.80px;top:109.00px;font-size:12.5px;color:#383838;letter-spacing:-0.720px">Encabezados</div>
<div class="t" style="left:360.40px;top:139.00px;font-size:12.5px;color:#383838;letter-spacing:-0.233px">Mostrar</div>
<div class="t" style="left:531.00px;top:104.00px;font-size:12.5px;color:#383838;letter-spacing:0.133px">Zoom</div>
<div class="t" style="left:574.00px;top:104.00px;font-size:12.5px;color:#383838;letter-spacing:-1.000px">100%</div>
<div class="t" style="left:616.50px;top:104.00px;font-size:12.5px;color:#383838;letter-spacing:-0.167px">Ampliar</div>
<div class="t" style="left:612.00px;top:120.00px;font-size:12.5px;color:#383838;letter-spacing:-0.438px">selección</div>
<div class="t" style="left:580.00px;top:139.00px;font-size:12.5px;color:#383838;letter-spacing:-0.833px">Zoom</div>
<div class="t" style="left:685.40px;top:104.00px;font-size:12.5px;color:#383838;letter-spacing:-0.450px">Nueva</div>
<div class="t" style="left:682.30px;top:120.00px;font-size:12.5px;color:#383838;letter-spacing:-0.633px">ventana</div>
<div class="t" style="left:729.00px;top:104.00px;font-size:12.5px;color:#383838;letter-spacing:-0.537px">Organizar</div>
<div class="t" style="left:742.00px;top:120.00px;font-size:12.5px;color:#383838;letter-spacing:0.200px">todo</div>
<div class="t" style="left:784.40px;top:104.00px;font-size:12.5px;color:#383838;letter-spacing:-0.140px">Inmovilizar</div>
<div class="t" style="left:867.90px;top:70.00px;font-size:12.5px;color:#383838;letter-spacing:-0.267px">Dividir</div>
<div class="t" style="left:868.90px;top:93.00px;font-size:12.5px;color:#383838;letter-spacing:-0.333px">Ocultar</div>
<div class="t" style="left:868.00px;top:116.00px;font-size:12.5px;color:#A6A6A6;letter-spacing:-0.200px">Mostrar</div>
<div class="t" style="left:947.00px;top:70.00px;font-size:12.5px;color:#383838;letter-spacing:-0.571px">Ver en paralelo</div>
<div class="t" style="left:946.00px;top:93.00px;font-size:12.5px;color:#A6A6A6;letter-spacing:-0.250px">Desplazamiento sincrónico</div>
<div class="t" style="left:946.00px;top:116.00px;font-size:12.5px;color:#A6A6A6;letter-spacing:-0.394px">Restablecer posición de la ventana</div>
<div class="t" style="left:920.80px;top:139.00px;font-size:12.5px;color:#383838;letter-spacing:-0.883px">Ventana</div>
<div class="t" style="left:1150.50px;top:104.00px;font-size:12.5px;color:#383838;letter-spacing:-0.250px">Cambiar</div>
<div class="t" style="left:1146.10px;top:120.00px;font-size:12.5px;color:#383838;letter-spacing:-0.529px">ventanas</div>
<div class="t" style="left:1221.60px;top:104.00px;font-size:12.5px;color:#383838;letter-spacing:-0.400px">Macros</div>
<div class="t" style="left:1222.00px;top:139.00px;font-size:12.5px;color:#383838;letter-spacing:-0.540px">Macros</div>
<div class="t" style="left:12.30px;top:172.00px;font-size:13px;color:#222222;letter-spacing:-0.300px">F10</div>
<div class="t" style="left:62.00px;top:204.00px;font-size:13px;color:#333333">A</div>
<div class="t" style="left:142.00px;top:204.00px;font-size:13px;color:#333333">B</div>
<div class="t" style="left:221.50px;top:204.00px;font-size:13px;color:#333333">C</div>
<div class="t" style="left:301.50px;top:204.00px;font-size:13px;color:#333333">D</div>
<div class="t" style="left:382.00px;top:204.00px;font-size:13px;color:#333333">E</div>
<div class="t" style="left:462.00px;top:204.00px;font-size:13px;color:#1B6E3F">F</div>
<div class="t" style="left:541.50px;top:204.00px;font-size:13px;color:#333333">G</div>
<div class="t" style="left:621.50px;top:204.00px;font-size:13px;color:#333333">H</div>
<div class="t" style="left:704.50px;top:204.00px;font-size:13px;color:#333333">I</div>
<div class="t" style="left:783.50px;top:204.00px;font-size:13px;color:#333333">J</div>
<div class="t" style="left:862.00px;top:204.00px;font-size:13px;color:#333333">K</div>
<div class="t" style="left:942.50px;top:204.00px;font-size:13px;color:#333333">L</div>
<div class="t" style="left:1021.00px;top:204.00px;font-size:13px;color:#333333">M</div>
<div class="t" style="left:1101.50px;top:204.00px;font-size:13px;color:#333333">N</div>
<div class="t" style="left:1181.50px;top:204.00px;font-size:13px;color:#333333">O</div>
<div class="t" style="left:1262.00px;top:204.00px;font-size:13px;color:#333333">P</div>
<div class="t" style="left:1341.50px;top:204.00px;font-size:13px;color:#333333">Q</div>
<div class="t" style="left:10.20px;top:225.00px;font-size:13px;color:#333333">1</div>
<div class="t" style="left:10.20px;top:245.00px;font-size:13px;color:#333333">2</div>
<div class="t" style="left:10.20px;top:265.00px;font-size:13px;color:#333333">3</div>
<div class="t" style="left:10.70px;top:285.00px;font-size:13px;color:#333333">4</div>
<div class="t" style="left:10.20px;top:305.00px;font-size:13px;color:#333333">5</div>
<div class="t" style="left:10.20px;top:325.00px;font-size:13px;color:#333333">6</div>
<div class="t" style="left:10.20px;top:345.00px;font-size:13px;color:#333333">7</div>
<div class="t" style="left:10.70px;top:365.00px;font-size:13px;color:#333333">8</div>
<div class="t" style="left:10.20px;top:385.00px;font-size:13px;color:#333333">9</div>
<div class="t" style="left:6.70px;top:405.00px;font-size:13px;color:#1B6E3F">10</div>
<div class="t" style="left:7.20px;top:425.00px;font-size:13px;color:#333333">11</div>
<div class="t" style="left:6.70px;top:445.00px;font-size:13px;color:#333333">12</div>
<div class="t" style="left:6.70px;top:465.00px;font-size:13px;color:#333333">13</div>
<div class="t" style="left:6.70px;top:485.00px;font-size:13px;color:#333333">14</div>
<div class="t" style="left:6.70px;top:505.00px;font-size:13px;color:#333333">15</div>
<div class="t" style="left:6.70px;top:525.00px;font-size:13px;color:#333333">16</div>
<div class="t" style="left:6.70px;top:545.00px;font-size:13px;color:#333333">17</div>
<div class="t" style="left:6.70px;top:565.00px;font-size:13px;color:#333333">18</div>
<div class="t" style="left:6.70px;top:585.00px;font-size:13px;color:#333333">19</div>
<div class="t" style="left:6.70px;top:605.00px;font-size:13px;color:#333333">20</div>
<div class="t" style="left:6.70px;top:625.00px;font-size:13px;color:#333333">21</div>
<div class="t" style="left:6.70px;top:645.00px;font-size:13px;color:#333333">22</div>
<div class="t" style="left:6.70px;top:665.00px;font-size:13px;color:#333333">23</div>
<div class="t" style="left:6.70px;top:685.00px;font-size:13px;color:#333333">24</div>
<div class="t" style="left:59.60px;top:225.00px;font-size:13px;color:#000000;font-weight:bold">ID</div>
<div class="t" style="left:119.45px;top:225.00px;font-size:13px;color:#000000;font-weight:bold;letter-spacing:-0.100px">Cantidad</div>
<div class="t" style="left:209.50px;top:225.00px;font-size:13px;color:#000000;font-weight:bold;letter-spacing:-0.700px">Costo</div>
<div class="t" style="left:89.80px;top:245.00px;font-size:13px;color:#000000">14</div>
<div class="t" style="left:162.60px;top:245.00px;font-size:13px;color:#000000">100</div>
<div class="t" style="left:194.20px;top:245.00px;font-size:13px;color:#000000">€</div>
<div class="t" style="left:208.40px;top:245.00px;font-size:13px;color:#000000">1.000,00</div>
<div class="t" style="left:89.80px;top:265.00px;font-size:13px;color:#000000">25</div>
<div class="t" style="left:162.60px;top:265.00px;font-size:13px;color:#000000">150</div>
<div class="t" style="left:194.20px;top:265.00px;font-size:13px;color:#000000">€</div>
<div class="t" style="left:208.40px;top:265.00px;font-size:13px;color:#000000">1.200,00</div>
<div class="t" style="left:89.80px;top:285.00px;font-size:13px;color:#000000">87</div>
<div class="t" style="left:162.60px;top:285.00px;font-size:13px;color:#000000">200</div>
<div class="t" style="left:194.20px;top:285.00px;font-size:13px;color:#000000">€</div>
<div class="t" style="left:226.40px;top:285.00px;font-size:13px;color:#000000">60,00</div>
<div class="t" style="left:89.80px;top:305.00px;font-size:13px;color:#000000">10</div>
<div class="t" style="left:162.60px;top:305.00px;font-size:13px;color:#000000">400</div>
<div class="t" style="left:194.20px;top:305.00px;font-size:13px;color:#000000">€</div>
<div class="t" style="left:219.40px;top:305.00px;font-size:13px;color:#000000">365,00</div>
<div class="t" style="left:82.80px;top:325.00px;font-size:13px;color:#000000">100</div>
<div class="t" style="left:154.60px;top:325.00px;font-size:13px;color:#000000">1500</div>
<div class="t" style="left:194.20px;top:325.00px;font-size:13px;color:#000000">€</div>
<div class="t" style="left:219.40px;top:325.00px;font-size:13px;color:#000000">500,00</div>
<div class="t" style="left:89.80px;top:345.00px;font-size:13px;color:#000000">25</div>
<div class="t" style="left:162.60px;top:345.00px;font-size:13px;color:#000000">210</div>
<div class="t" style="left:194.20px;top:345.00px;font-size:13px;color:#000000">€</div>
<div class="t" style="left:219.40px;top:345.00px;font-size:13px;color:#000000">600,00</div>
<div class="t" style="left:937.00px;top:163.00px;font-size:13px;color:#4A4A4A;font-weight:bold;letter-spacing:-0.586px;z-index:11">Ver en paralelo</div>
<div class="t" style="left:936.00px;top:184.00px;font-size:12.5px;color:#4A4A4A;letter-spacing:-0.271px;z-index:11">En lugar de ir y volver de un libro a otro, puede</div>
<div class="t" style="left:937.00px;top:199.00px;font-size:12.5px;color:#4A4A4A;letter-spacing:-0.326px;z-index:11">visualizarlos en paralelo, de modo que puede</div>
<div class="t" style="left:937.00px;top:213.50px;font-size:12.5px;color:#4A4A4A;letter-spacing:-0.246px;z-index:11">compararlos más fácilmente.</div>
<div class="t" style="left:112.80px;top:712.00px;font-size:13px;color:#1B6E3F;font-weight:bold;letter-spacing:0.050px">Hoja1</div>
<div class="t" style="left:8.50px;top:736.00px;font-size:12.5px;color:#444444;letter-spacing:-0.625px">Listo</div>
<div class="t" style="left:1392.90px;top:736.00px;font-size:12.5px;color:#6A6A6A;letter-spacing:-1.833px">100%</div>
</body></html>
